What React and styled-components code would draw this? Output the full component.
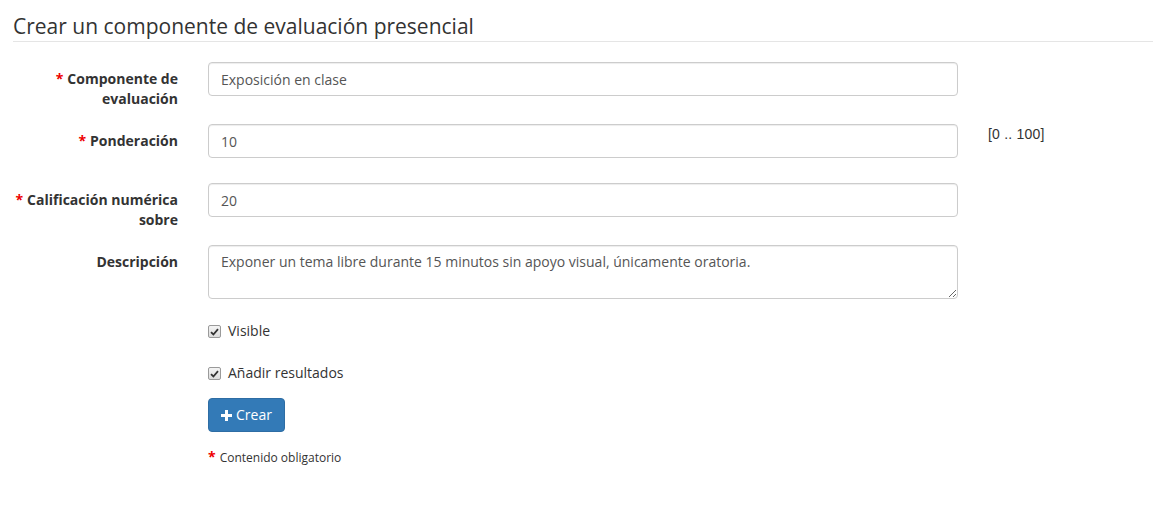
import React from "react";
import styled, { createGlobalStyle } from "styled-components";

const Global = createGlobalStyle`
  html, body { margin: 0; padding: 0; background: #fff; }
  body {
    font-family: "Open Sans", "Liberation Sans", sans-serif;
    font-size: 14px;
    line-height: 20px;
    color: #333;
  }
  * { box-sizing: border-box; }
`;

const Page = styled.div`
  padding: 0 11px 0 13px;
`;

const Title = styled.h1`
  margin: 15px 0 0;
  padding-bottom: 3px;
  font-size: 21px;
  line-height: 23px;
  font-weight: 400;
  color: #333;
  border-bottom: 1px solid #e5e5e5;
`;

const Form = styled.form`
  margin-top: 20px;
  padding-left: 0;
  display: grid;
  grid-template-columns: 165px 750px auto;
  column-gap: 30px;
  align-items: start;
`;

const Label = styled.label`
  grid-column: 1;
  text-align: right;
  font-weight: 700;
  padding-top: 7px;
  margin-bottom: ${(p) => p.$mb || 15}px;
  color: #333;
`;

const Star = styled.span`
  color: #e00;
  font-weight: 700;
  margin-right: 4px;
`;

const Input = styled.input`
  grid-column: 2;
  display: block;
  width: 100%;
  height: 34px;
  padding: 6px 12px;
  font: inherit;
  font-size: 14px;
  line-height: 20px;
  color: #555;
  background: #fff;
  border: 1px solid #ccc;
  border-radius: 4px;
  box-shadow: inset 0 1px 1px rgba(0, 0, 0, 0.075);
  margin-bottom: ${(p) => p.$mb || 15}px;
  outline: none;
`;

const TextArea = styled.textarea`
  grid-column: 2;
  display: block;
  width: 100%;
  height: 54px;
  padding: 6px 12px;
  font: inherit;
  font-size: 14px;
  line-height: 20px;
  color: #555;
  background: #fff;
  border: 1px solid #ccc;
  border-radius: 4px;
  box-shadow: inset 0 1px 1px rgba(0, 0, 0, 0.075);
  margin: 0 0 15px;
  outline: none;
`;

const Help = styled.div`
  grid-column: 3;
  padding-top: 1px;
  font-family: "Liberation Sans", Arial, sans-serif;
  font-size: 14px;
  line-height: 18px;
  letter-spacing: 0.2px;
  color: #333;
`;

const CheckRow = styled.label`
  grid-column: 2;
  display: flex;
  align-items: center;
  gap: 7px;
  padding-top: 7px;
  min-height: 27px;
  margin-bottom: 15px;
  line-height: 20px;
  color: #333;
`;

const Box = styled.span`
  width: 13px;
  height: 13px;
  flex: none;
  border: 1px solid #9a9a9a;
  border-radius: 2px;
  background: linear-gradient(#f4f4f4, #dcdcdc);
  display: flex;
  align-items: center;
  justify-content: center;
  margin-top: 1px;
`;

const Button = styled.button`
  grid-column: 2;
  justify-self: start;
  display: inline-flex;
  align-items: center;
  gap: 4px;
  height: 34px;
  padding: 6px 12px;
  font: inherit;
  font-size: 14px;
  line-height: 20px;
  color: #fff;
  background: #337ab7;
  border: 1px solid #2e6da4;
  border-radius: 4px;
  margin-bottom: 16px;
`;

const Note = styled.div`
  grid-column: 2;
  font-size: 12px;
  line-height: 17px;
  color: #333;
`;

const Check = () => (
  <Box>
    <svg width="9" height="8" viewBox="0 0 9 8">
      <path d="M1 4.2 L3.4 6.5 L8 1.2" fill="none" stroke="#333" strokeWidth="1.8" />
    </svg>
  </Box>
);

export default function App() {
  return (
    <Page>
      <Global />
      <Title>Crear un componente de evaluación presencial</Title>
      <Form onSubmit={(e) => e.preventDefault()}>
        <Label>
          <Star>*</Star>Componente de evaluación
        </Label>
        <Input defaultValue="Exposición en clase" />
        <div />

        <Label $mb={25}>
          <Star>*</Star>Ponderación
        </Label>
        <Input defaultValue="10" $mb={25} />
        <Help>[0 .. 100]</Help>

        <Label>
          <Star>*</Star>Calificación numérica sobre
        </Label>
        <Input defaultValue="20" />
        <div />

        <Label>Descripción</Label>
        <TextArea
          rows={2}
          defaultValue="Exponer un tema libre durante 15 minutos sin apoyo visual, únicamente oratoria."
        />
        <div />

        <CheckRow>
          <Check />
          Visible
        </CheckRow>
        <CheckRow>
          <Check />
          Añadir resultados
        </CheckRow>

        <Button type="submit">
          <svg width="11" height="11" viewBox="0 0 11 11">
            <path d="M4 0h3v4h4v3H7v4H4V7H0V4h4z" fill="#fff" />
          </svg>
          Crear
        </Button>

        <Note>
          <Star style={{ fontSize: 14 }}>*</Star>Contenido obligatorio
        </Note>
      </Form>
    </Page>
  );
}
